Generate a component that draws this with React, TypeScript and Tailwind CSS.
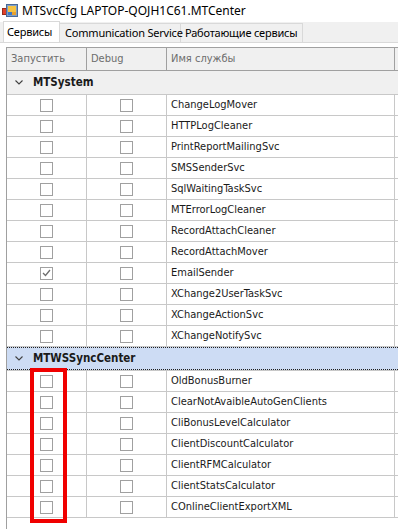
import React from "react";

const sys = [
  "ChangeLogMover",
  "HTTPLogCleaner",
  "PrintReportMailingSvc",
  "SMSSenderSvc",
  "SqlWaitingTaskSvc",
  "MTErrorLogCleaner",
  "RecordAttachCleaner",
  "RecordAttachMover",
  "EmailSender",
  "XChange2UserTaskSvc",
  "XChangeActionSvc",
  "XChangeNotifySvc",
];
const sync = [
  "OldBonusBurner",
  "ClearNotAvaibleAutoGenClients",
  "CliBonusLevelCalculator",
  "ClientDiscountCalculator",
  "ClientRFMCalculator",
  "ClientStatsCalculator",
  "COnlineClientExportXML",
];

function Box({ checked }: { checked?: boolean }) {
  return (
    <div className="w-[13px] h-[13px] border border-[#a0a0a0] bg-white flex items-center justify-center">
      {checked && (
        <svg width="9" height="8" viewBox="0 0 9 8">
          <path d="M1 4 L3.5 6.5 L8 1" fill="none" stroke="#6e6e6e" strokeWidth="1.3" />
        </svg>
      )}
    </div>
  );
}

function Row({ name, checked }: { name: string; checked?: boolean }) {
  return (
    <div className="flex h-[21px] border-b border-[#c8c8c8] bg-white">
      <div className="w-[80px] shrink-0 border-r border-[#c8c8c8] flex items-center justify-center">
        <Box checked={checked} />
      </div>
      <div className="w-[80px] shrink-0 border-r border-[#c8c8c8] flex items-center justify-center">
        <Box />
      </div>
      <div className="w-[228px] shrink-0 border-r border-[#c8c8c8] flex items-center pl-[4px] text-[#1a1a1a] whitespace-nowrap">
        {name}
      </div>
    </div>
  );
}

function Chevron() {
  return (
    <svg width="8" height="5" viewBox="0 0 8 5" className="shrink-0">
      <path d="M0.5 0.5 L4 4 L7.5 0.5" fill="none" stroke="#404040" strokeWidth="1.1" />
    </svg>
  );
}

function Group({ name, selected }: { name: string; selected?: boolean }) {
  return (
    <div
      className={
        selected
          ? "h-[24px] border-b border-[#c8c8c8] bg-[#cddcf4]"
          : "h-[24px] border-b border-[#c8c8c8] bg-[#f0f0f0]"
      }
    >
      <div
        className={
          selected
            ? "h-[23px] flex items-center border-y border-dotted border-[#202020] pl-[8px]"
            : "h-[23px] flex items-center pl-[8px]"
        }
      >
        <Chevron />
        <span className="ml-[10px] font-bold text-[#1a1a1a] text-[11.5px]">{name}</span>
      </div>
    </div>
  );
}

function AppIcon() {
  return (
    <svg width="16" height="14" viewBox="0 0 16 14">
      <rect x="0.5" y="4.5" width="5" height="6" fill="#e0402a" stroke="#9a2a1a" />
      <rect x="4.5" y="0.5" width="11" height="12" fill="#7fa0c8" stroke="#4a6a98" />
      <rect x="6" y="2" width="8" height="6" fill="#f5c342" />
      <rect x="6" y="8" width="4" height="3" fill="#3c78c8" />
      <rect x="10" y="8" width="4" height="3" fill="#e8a030" />
    </svg>
  );
}

export default function App() {
  return (
    <div className="w-[398px] h-[529px] overflow-hidden bg-white relative font-['Tahoma','DejaVu_Sans_Condensed','Noto_Sans',sans-serif] text-[11px]">
      {/* Title bar */}
      <div className="h-[22px] flex items-center pl-[2px] font-['Noto_Sans',sans-serif] text-[12px] text-black">
        <AppIcon />
        <span className="ml-[4px] whitespace-nowrap">MTSvcCfg LAPTOP-QOJH1C61.MTCenter</span>
      </div>
      {/* Tabs */}
      <div className="h-[21px] bg-[#f0f0f0] border-b border-[#d9d9d9] flex items-end pl-[3px] font-['Noto_Sans',sans-serif] text-[11px] tracking-[-0.2px] text-black">
        <div className="h-[21px] w-[57px] bg-white border border-b-0 border-[#d9d9d9] flex items-center pl-[3px]">Сервисы</div>
        <div className="h-[19px] w-[121px] border-t border-r border-[#d9d9d9] flex items-center pl-[5px] whitespace-nowrap">Communication Service</div>
        <div className="h-[19px] w-[122px] border-t border-r border-[#d9d9d9] flex items-center pl-[4px] whitespace-nowrap">Работающие сервисы</div>
      </div>
      {/* Grid */}
      <div className="mt-[4px] ml-[6px] border-l border-[#a0a0a0] h-[600px]">
        <div className="flex h-[24px] border-y border-[#a0a0a0] bg-[#f0f0f0] text-[#6d6d6d]">
          <div className="w-[80px] shrink-0 border-r border-[#a0a0a0] flex items-center pl-[4px]">Запустить</div>
          <div className="w-[80px] shrink-0 border-r border-[#a0a0a0] flex items-center pl-[4px]">Debug</div>
          <div className="w-[228px] shrink-0 border-r border-[#a0a0a0] flex items-center pl-[4px]">Имя службы</div>
        </div>
        <Group name="MTSystem" />
        {sys.map((n) => (
          <Row key={n} name={n} checked={n === "EmailSender"} />
        ))}
        <Group name="MTWSSyncCenter" selected />
        {sync.map((n) => (
          <Row key={n} name={n} />
        ))}
      </div>
      {/* Annotation */}
      <div className="absolute left-[30px] top-[368px] w-[37px] h-[155px] border-[4px] border-[#f00000]" />
    </div>
  );
}
